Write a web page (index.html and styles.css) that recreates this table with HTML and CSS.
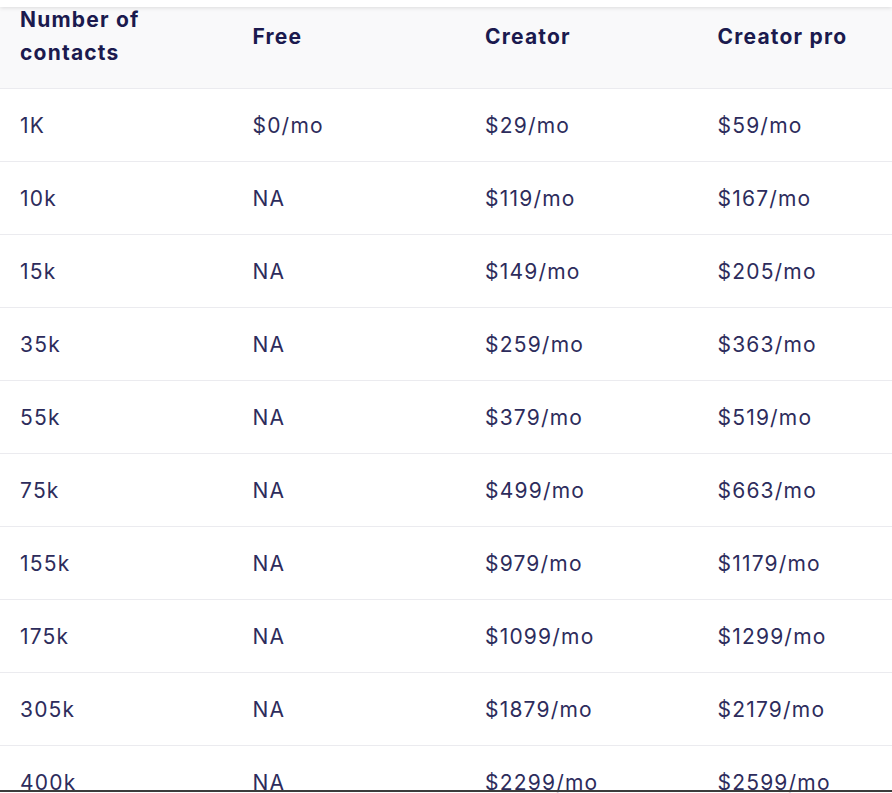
FILE: index.html
```html
<!DOCTYPE html>
<html lang="en">
<head>
<meta charset="utf-8">
<title>Pricing by contacts</title>
<link rel="stylesheet" href="styles.css">
</head>
<body>
<div class="topbar"></div>
<div class="scroller">
<table class="pricing">
  <thead>
    <tr>
      <th>Number of<br>contacts</th>
      <th>Free</th>
      <th>Creator</th>
      <th>Creator pro</th>
    </tr>
  </thead>
  <tbody>
    <tr><td>1K</td><td>$0/mo</td><td>$29/mo</td><td>$59/mo</td></tr>
    <tr><td>10k</td><td>NA</td><td>$119/mo</td><td>$167/mo</td></tr>
    <tr><td>15k</td><td>NA</td><td>$149/mo</td><td>$205/mo</td></tr>
    <tr><td>35k</td><td>NA</td><td>$259/mo</td><td>$363/mo</td></tr>
    <tr><td>55k</td><td>NA</td><td>$379/mo</td><td>$519/mo</td></tr>
    <tr><td>75k</td><td>NA</td><td>$499/mo</td><td>$663/mo</td></tr>
    <tr><td>155k</td><td>NA</td><td>$979/mo</td><td>$1179/mo</td></tr>
    <tr><td>175k</td><td>NA</td><td>$1099/mo</td><td>$1299/mo</td></tr>
    <tr><td>305k</td><td>NA</td><td>$1879/mo</td><td>$2179/mo</td></tr>
    <tr><td>400k</td><td>NA</td><td>$2299/mo</td><td>$2599/mo</td></tr>
  </tbody>
</table>
</div>
<div class="bottombar"></div>
</body>
</html>
```
FILE: styles.css
```css
html, body {
  margin: 0;
  padding: 0;
  background: #ffffff;
  overflow: hidden;
  height: 793px;
}

body {
  font-family: Inter, "Noto Sans", sans-serif;
  color: #2d2c5c;
}

.topbar {
  position: fixed;
  top: 0;
  left: 0;
  right: 0;
  height: 7px;
  background: #ffffff;
  box-shadow: 0 1px 4px rgba(0, 0, 0, 0.12);
  z-index: 2;
}

.bottombar {
  position: fixed;
  left: 0;
  right: 0;
  bottom: 1px;
  height: 2px;
  background: #3c3c3c;
  z-index: 2;
}

.scroller {
  width: 892px;
  overflow: hidden;
}

.pricing {
  width: 930px;
  border-collapse: collapse;
  table-layout: fixed;
}

.pricing th {
  background: #f9f9fa;
  color: #1b1a4e;
  font-weight: 700;
  font-size: 21px;
  letter-spacing: 1.2px;
  line-height: 33px;
  text-align: left;
  vertical-align: middle;
  padding: 3px 20px 19px 20px;
  height: 66px;
  border-bottom: 1px solid #ebebef;
}

.pricing td {
  font-size: 21px;
  font-weight: 400;
  letter-spacing: 1.2px;
  line-height: 32px;
  padding: 21px 20px 19px 20px;
  border-bottom: 1px solid #ebebef;
  white-space: nowrap;
}
```
